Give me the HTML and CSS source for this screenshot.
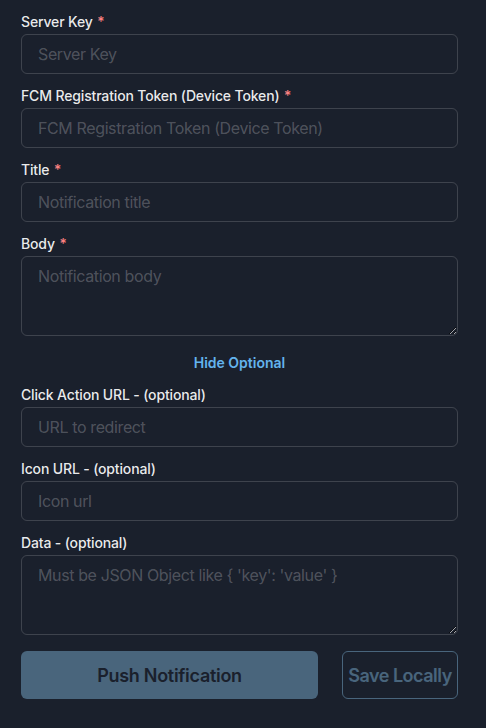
FILE: index.html
```html
<!DOCTYPE html>
<html lang="en">
<head>
<meta charset="utf-8">
<title>Push Notification</title>
<link rel="stylesheet" href="styles.css">
</head>
<body>
<form class="form">
  <div class="field">
    <label class="label" for="k">Server Key <span class="req">*</span></label>
    <input class="input" id="k" placeholder="Server Key">
  </div>
  <div class="field">
    <label class="label" for="t">FCM Registration Token (Device Token) <span class="req">*</span></label>
    <input class="input" id="t" placeholder="FCM Registration Token (Device Token)">
  </div>
  <div class="field">
    <label class="label" for="ti">Title <span class="req">*</span></label>
    <input class="input" id="ti" placeholder="Notification title">
  </div>
  <div class="field">
    <label class="label" for="b">Body <span class="req">*</span></label>
    <textarea class="input area" id="b" placeholder="Notification body"></textarea>
  </div>
  <div class="toggle-row">
    <button type="button" class="toggle">Hide Optional</button>
  </div>
  <div class="field">
    <label class="label" for="c">Click Action URL - (optional)</label>
    <input class="input" id="c" placeholder="URL to redirect">
  </div>
  <div class="field">
    <label class="label" for="i">Icon URL - (optional)</label>
    <input class="input" id="i" placeholder="Icon url">
  </div>
  <div class="field">
    <label class="label" for="d">Data - (optional)</label>
    <textarea class="input area" id="d" placeholder="Must be JSON Object like { 'key': 'value' }"></textarea>
  </div>
  <div class="actions">
    <button type="button" class="btn btn-primary" disabled>Push Notification</button>
    <button type="button" class="btn btn-outline" disabled>Save Locally</button>
  </div>
</form>
</body>
</html>
```

FILE: styles.css
```css
* { box-sizing: border-box; }
html, body {
  margin: 0;
  background: #1a202c;
}
body {
  font-family: Inter, "Noto Sans", sans-serif;
  color: rgba(255, 255, 255, 0.92);
}
.form {
  width: 437px;
  margin-left: 21px;
  padding-top: 11px;
  display: flex;
  flex-direction: column;
  gap: 11px;
}
.field {
  display: flex;
  flex-direction: column;
}
.label {
  font-size: 14px;
  line-height: 21px;
  font-weight: 500;
  letter-spacing: -0.15px;
  margin-bottom: 2px;
  color: rgba(255, 255, 255, 0.92);
}
.req {
  color: #fc8181;
  margin-left: 1px;
}
.input {
  display: block;
  width: 100%;
  height: 40px;
  padding: 0 16px;
  border: 1px solid rgba(255, 255, 255, 0.16);
  border-radius: 6px;
  background: transparent;
  font-family: inherit;
  font-size: 16px;
  letter-spacing: -0.38px;
  color: rgba(255, 255, 255, 0.92);
  outline: none;
}
.input::placeholder {
  color: rgba(255, 255, 255, 0.24);
}
.area {
  height: 80px;
  padding-top: 8px;
  padding-bottom: 8px;
  line-height: 22px;
  resize: vertical;
}
.toggle-row {
  height: 26px;
  padding-top: 5px;
  display: flex;
  justify-content: center;
}
.toggle {
  background: none;
  border: 0;
  padding: 0;
  font-family: inherit;
  font-size: 14px;
  line-height: 21px;
  font-weight: 600;
  color: #63b3ed;
  cursor: pointer;
}
.actions {
  display: flex;
  gap: 24px;
  margin-top: 5px;
}
.btn {
  height: 48px;
  border-radius: 6px;
  font-family: inherit;
  font-size: 18px;
  font-weight: 600;
  opacity: 0.4;
  cursor: not-allowed;
}
.btn-primary {
  flex: 1;
  background: #90cdf4;
  border: 0;
  color: #1a202c;
  letter-spacing: -0.3px;
}
.btn-outline {
  width: 116px;
  padding: 0;
  background: transparent;
  border: 1px solid #90cdf4;
  color: #90cdf4;
  white-space: nowrap;
  letter-spacing: -0.5px;
}
```
